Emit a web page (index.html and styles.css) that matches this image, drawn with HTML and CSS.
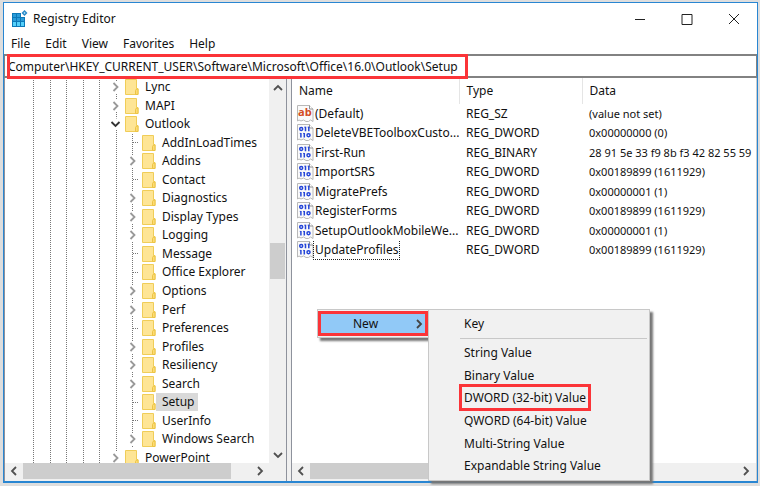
FILE: index.html
```html
<!DOCTYPE html>
<html lang="en">
<head>
<meta charset="utf-8">
<title>Registry Editor</title>
<link rel="stylesheet" href="styles.css">
</head>
<body>
<svg class="defs" aria-hidden="true">
  <symbol id="folder" viewBox="0 0 14 18"><path d="M.5 1.500h11v9h1.500v6H.5z" fill="#fee595" stroke="#f0cd58"/><path d="M10.500 16.500v-4l1-1.500h1.500v5.500z" fill="#fddb74" stroke="#ecc445"/></symbol>
  <symbol id="right" viewBox="0 0 8 10"><path d="M2 1l4 4-4 4" fill="none" stroke="currentColor" stroke-width="1.800"/></symbol>
  <symbol id="page" viewBox="0 0 17 18"><path d="M.5.500h12l3.500 3.500v12.500l-2.500-1.500-2 1.500-2.500 0-2.500-1.500-2.500 1-2 -1-1.500 1z" fill="#fafafa" stroke="#b8b8b8"/><path d="M12.500.500v3.500H16" fill="#fff" stroke="#909090"/></symbol>
  <symbol id="binary" viewBox="0 0 17 18"><use href="#page"/><g fill="none" stroke="#2445d8" stroke-width="1.500"><rect x="2.700" y="3.500" width="3" height="3" rx="1.400"/><path d="M8.500 2.800v4.400M11.800 2.800v4.400M3.900 9v4.400M7.300 9v4.400"/><path d="M7.400 3.200h1M10.700 3.200h1M2.800 9.400h1M6.200 9.400h1" stroke-width="1"/><rect x="10" y="9.700" width="3" height="3" rx="1.400"/></g></symbol>
</svg>
<main class="window">
  <header class="titlebar">
    <svg class="app-icon" viewBox="0 0 16 17"><path d="M0 3h9v4h4v10H0z" fill="#0b78b8"/><path d="M1 4h3v3H1zM5 4h3v3H5zM1 8h3v3H1zM5 8h3v3H5zM9 8h3v3H9z" fill="#2a9bd8"/><path d="M1 12h3v4H1zM5 12h3v4H5zM9 12h3v4H9z" fill="#55d0fa"/><path d="M12.500 0l3 3-3 3-3-3z" fill="#2a8ac8"/><path d="M12.500 2l1 1-1 1-1-1z" fill="#bce8ff"/></svg>
    <h1>Registry Editor</h1>
    <div class="controls">
      <button aria-label="Minimize"><svg viewBox="0 0 12 12"><path d="M1 6.500h10"/></svg></button>
      <button aria-label="Maximize"><svg viewBox="0 0 12 12"><path d="M1 1.500h10v10H1z"/></svg></button>
      <button aria-label="Close"><svg viewBox="0 0 12 12"><path d="M1 1l10 10M11 1L1 11"/></svg></button>
    </div>
  </header>
  <nav class="menubar"><button>File</button><button>Edit</button><button>View</button><button>Favorites</button><button>Help</button></nav>
  <div class="address">
    <input aria-label="Registry path" value="Computer\HKEY_CURRENT_USER\Software\Microsoft\Office\16.0\Outlook\Setup">
  </div>
  <div class="panes">
    <section class="tree-pane">
      <div class="tree-view">
        <ul class="tree">
          <li class="node"><svg class="chev"><use href="#right"/></svg><svg class="folder"><use href="#folder"/></svg><span>Lync</span></li>
          <li class="node"><svg class="chev"><use href="#right"/></svg><svg class="folder"><use href="#folder"/></svg><span>MAPI</span></li>
          <li class="node"><svg class="chev open"><use href="#right"/></svg><svg class="folder"><use href="#folder"/></svg><span>Outlook</span></li>
          <li class="branch"><ul class="children">
            <li class="node"><i class="leaf"></i><svg class="folder"><use href="#folder"/></svg><span>AddInLoadTimes</span></li>
            <li class="node"><svg class="chev"><use href="#right"/></svg><svg class="folder"><use href="#folder"/></svg><span>Addins</span></li>
            <li class="node"><i class="leaf"></i><svg class="folder"><use href="#folder"/></svg><span>Contact</span></li>
            <li class="node"><svg class="chev"><use href="#right"/></svg><svg class="folder"><use href="#folder"/></svg><span>Diagnostics</span></li>
            <li class="node"><svg class="chev"><use href="#right"/></svg><svg class="folder"><use href="#folder"/></svg><span>Display Types</span></li>
            <li class="node"><svg class="chev"><use href="#right"/></svg><svg class="folder"><use href="#folder"/></svg><span>Logging</span></li>
            <li class="node"><i class="leaf"></i><svg class="folder"><use href="#folder"/></svg><span>Message</span></li>
            <li class="node"><i class="leaf"></i><svg class="folder"><use href="#folder"/></svg><span>Office Explorer</span></li>
            <li class="node"><svg class="chev"><use href="#right"/></svg><svg class="folder"><use href="#folder"/></svg><span>Options</span></li>
            <li class="node"><svg class="chev"><use href="#right"/></svg><svg class="folder"><use href="#folder"/></svg><span>Perf</span></li>
            <li class="node"><i class="leaf"></i><svg class="folder"><use href="#folder"/></svg><span>Preferences</span></li>
            <li class="node"><svg class="chev"><use href="#right"/></svg><svg class="folder"><use href="#folder"/></svg><span>Profiles</span></li>
            <li class="node"><svg class="chev"><use href="#right"/></svg><svg class="folder"><use href="#folder"/></svg><span>Resiliency</span></li>
            <li class="node"><svg class="chev"><use href="#right"/></svg><svg class="folder"><use href="#folder"/></svg><span>Search</span></li>
            <li class="node selected"><i class="leaf"></i><svg class="folder"><use href="#folder"/></svg><span>Setup</span></li>
            <li class="node"><i class="leaf"></i><svg class="folder"><use href="#folder"/></svg><span>UserInfo</span></li>
            <li class="node"><svg class="chev"><use href="#right"/></svg><svg class="folder"><use href="#folder"/></svg><span>Windows Search</span></li>
          </ul></li>
          <li class="node"><svg class="chev"><use href="#right"/></svg><svg class="folder"><use href="#folder"/></svg><span>PowerPoint</span></li>
        </ul>
        <div class="vscroll"><svg class="arrow up"><use href="#right"/></svg><div class="vthumb"></div><svg class="arrow down"><use href="#right"/></svg></div>
      </div>
      <div class="hscroll"><svg class="arrow left"><use href="#right"/></svg><div class="hthumb"></div><svg class="arrow"><use href="#right"/></svg></div>
    </section>
    <section class="list-pane">
      <div class="values">
        <table>
          <colgroup><col class="c-name"><col class="c-type"><col></colgroup>
          <thead><tr><th>Name</th><th>Type</th><th>Data</th></tr></thead>
          <tbody>
            <tr><td><div class="name"><svg class="vicon" viewBox="0 0 17 18"><use href="#page"/><text x="1" y="11" class="ab">ab</text></svg><span>(Default)</span></div></td><td>REG_SZ</td><td>(value not set)</td></tr>
            <tr><td><div class="name"><svg class="vicon"><use href="#binary"/></svg><span>DeleteVBEToolboxCusto...</span></div></td><td>REG_DWORD</td><td>0x00000000 (0)</td></tr>
            <tr><td><div class="name"><svg class="vicon"><use href="#binary"/></svg><span>First-Run</span></div></td><td>REG_BINARY</td><td>28 91 5e 33 f9 8b f3 42 82 55 59</td></tr>
            <tr><td><div class="name"><svg class="vicon"><use href="#binary"/></svg><span>ImportSRS</span></div></td><td>REG_DWORD</td><td>0x00189899 (1611929)</td></tr>
            <tr><td><div class="name"><svg class="vicon"><use href="#binary"/></svg><span>MigratePrefs</span></div></td><td>REG_DWORD</td><td>0x00000001 (1)</td></tr>
            <tr><td><div class="name"><svg class="vicon"><use href="#binary"/></svg><span>RegisterForms</span></div></td><td>REG_DWORD</td><td>0x00189899 (1611929)</td></tr>
            <tr><td><div class="name"><svg class="vicon"><use href="#binary"/></svg><span>SetupOutlookMobileWe...</span></div></td><td>REG_DWORD</td><td>0x00000001 (1)</td></tr>
            <tr><td><div class="name focused"><svg class="vicon"><use href="#binary"/></svg><span>UpdateProfiles</span></div></td><td>REG_DWORD</td><td>0x00189899 (1611929)</td></tr>
          </tbody>
        </table>
      </div>
      <div class="hscroll"><svg class="arrow left"><use href="#right"/></svg><div class="hthumb"></div><svg class="arrow"><use href="#right"/></svg></div>
      <div class="context">
        <div class="menu"><button>New<svg class="arrow"><use href="#right"/></svg></button></div>
        <div class="submenu">
          <button>Key</button>
          <hr>
          <div class="kinds">
            <button>String Value</button>
            <button>Binary Value</button>
            <button><mark>DWORD (32-bit) Value</mark></button>
            <button>QWORD (64-bit) Value</button>
            <button>Multi-String Value</button>
            <button>Expandable String Value</button>
          </div>
        </div>
      </div>
    </section>
  </div>
</main>
</body>
</html>
```
FILE: styles.css
```css
* { box-sizing: border-box; }
html, body { height: 100%; }
body {
  margin: 0;
  padding: 2px 2px 3px 3px;
  background: #dedede;
  color: #111;
  font: 12px/18px "Noto Sans", "Open Sans", sans-serif;
}
button, input { font: inherit; color: inherit; border: 0; padding: 0; margin: 0; background: none; text-align: left; }
ul { list-style: none; margin: 0; padding: 0; }
svg { flex: none; display: block; }
.defs { position: absolute; width: 0; height: 0; }

.window { height: 100%; display: flex; flex-direction: column; background: #fff; border: 1px solid #2986d2; border-bottom-width: 2px; }
.titlebar { display: flex; align-items: center; height: 31px; padding-left: 8px; flex: none; }
.app-icon { width: 16px; height: 17px; }
h1 { margin: 0 0 0 5px; font: inherit; }
.controls { margin-left: auto; display: flex; }
.controls button { width: 47px; display: grid; place-items: center; }
.controls svg { width: 12px; height: 12px; fill: none; stroke: #222; }
.menubar { display: flex; gap: 15px; height: 20px; padding-left: 7px; flex: none; }
.address { height: 24px; flex: none; border: 1px solid #828282; border-width: 2px 1px; display: flex; position: relative; }
.address input { width: 461px; height: 25px; margin: -2px 0 -3px 2px; outline: 3px solid #fb3438; outline-offset: -3px; padding: 0 1px; position: relative; z-index: 1; }

.panes { flex: 1; min-height: 0; display: flex; gap: 4px; background: #f0f0f0; }
.tree-pane, .list-pane { display: flex; flex-direction: column; border: 1px solid #8e929c; border-width: 0 1px; background: #fff; min-width: 0; }
.tree-pane { flex: 0 0 283px; }
.list-pane { flex: 1; position: relative; border-right-color: #ccc; }
.tree-view { flex: 1; min-height: 0; display: flex; overflow: hidden; }

.tree {
  --dots: repeating-linear-gradient(#777 0 1px, transparent 1px 2px);
  flex: 1;
  height: calc(100% + 4px);
  padding-left: 105px;
  display: grid;
  grid-template-rows: repeat(3, 1fr) 17fr 1fr;
  background: var(--dots) 28px 0, var(--dots) 45px 0, var(--dots) 61px 0, var(--dots) 78px 0, var(--dots) 94px 0, var(--dots) 111px 0;
  background-size: 1px 100%;
  background-repeat: no-repeat;
}
.children { height: 100%; margin-left: 17px; display: grid; grid-auto-rows: 1fr; background: var(--dots) 5px 0 / 1px 100% no-repeat; }
.node { display: flex; align-items: center; min-height: 0; }
.node span { padding: 0 4px 0 6px; }
.chev { width: 11px; height: 12px; padding: 1px 1px; background: #fff; color: #999; }
.chev.open { transform: rotate(90deg); color: #333; }
.leaf { width: 11px; height: 1px; background: repeating-linear-gradient(90deg, #777 0 1px, transparent 1px 2px) 6px 0 no-repeat; }
.folder { width: 14px; height: 18px; margin-left: 4px; }
.selected span { background: #d9d9d9; }

.arrow { width: 8px; height: 10px; color: #505050; }
.up { transform: rotate(-90deg); }
.down { transform: rotate(90deg); }
.left { transform: rotate(180deg); }
.vscroll { flex: 0 0 17px; background: #f0f0f0; display: flex; flex-direction: column; align-items: center; padding: 5px 0 3px; }
.vthumb { width: 15px; height: 36px; background: #cdcdcd; margin: 150px 0 auto; }
.hscroll { flex: 0 0 18px; background: #f0f0f0; display: flex; align-items: center; padding: 0 22px 2px 5px; }
.hthumb { height: 16px; flex: 1; background: #cdcdcd; margin: 0 25px 0 5px; }
.list-pane .hscroll { padding-right: 6px; }
.list-pane .hthumb { margin-right: 220px; }

.values { flex: 1; min-height: 0; overflow: hidden; }
table { width: 100%; table-layout: fixed; border-collapse: collapse; height: 182px; }
.c-name { width: 167px; }
.c-type { width: 123px; }
th { height: 26px; font-weight: normal; text-align: left; border-right: 1px solid #e5e5e5; }
th:last-child { border: 0; }
th, td { padding: 0 0 0 7px; white-space: nowrap; overflow: hidden; }
td:first-child { padding-left: 5px; }
td:last-child { font-size: 11px; }
.name { display: flex; align-items: center; height: 18px; }
.name span { padding: 0 1px; }
.focused span { outline: 1px dotted #222; }
.vicon { width: 17px; height: 18px; }
.ab { font: bold 11px "Open Sans", sans-serif; fill: #d34b22; }

.context { position: absolute; left: 25px; top: 231px; display: flex; align-items: flex-start; }
.menu, .submenu { background: #f1f1f1; border: 1px solid #c8c8c8; box-shadow: 3px 3px 2px #777; }
.menu { padding: 1px 0 1px 0; border-right: 0; }
.menu button { display: flex; align-items: center; width: 110px; height: 25px; padding: 0 2px 0 32px; border: 3px solid #fb3438; background: #91c9f7; }
.menu .arrow { margin-left: auto; color: #444; }
.submenu { width: 222px; padding: 3px 2px 2px; position: relative; }
.submenu button { display: block; width: 100%; height: 22px; padding-left: 33px; }
.submenu hr { margin: 3px 0 3px 29px; border: 0; border-top: 1px solid #c8c8c8; }
.kinds { display: grid; grid-auto-rows: 1fr; height: 136px; }
.kinds mark { background: none; color: inherit; outline: 3px solid #fb3438; outline-offset: 2px; }
```
